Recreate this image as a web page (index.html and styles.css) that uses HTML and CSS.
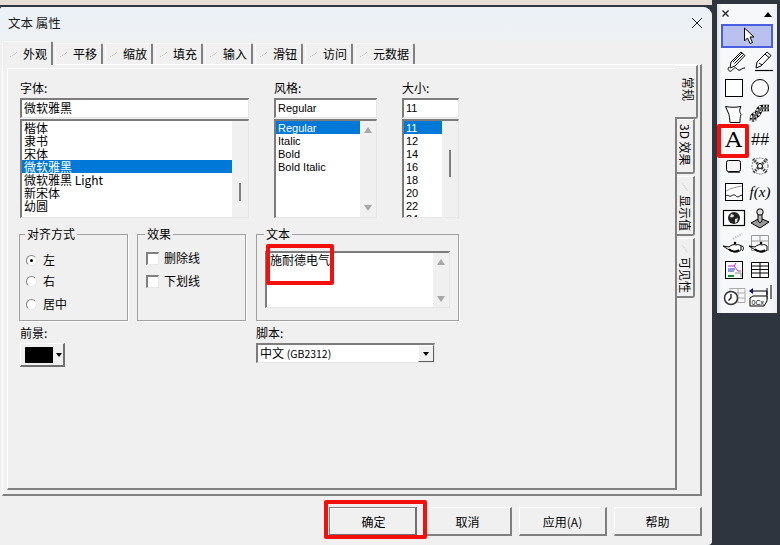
FILE: index.html
```html
<!DOCTYPE html>
<html lang="zh">
<head>
<meta charset="utf-8">
<title>文本 属性</title>
<link rel="stylesheet" href="styles.css">
</head>
<body>
<svg class="defs" width="0" height="0" aria-hidden="true">
  <symbol id="tick" viewBox="0 0 8 8"><path d="M0 6.5h1M2 5.5h1M3.500 4.500h1M5 3.500h1M6 2.500h1" stroke="#c4c4c4" fill="none"/></symbol>
  <symbol id="tickv" viewBox="0 0 8 8"><path d="M1.500 1h1M2.500 2.500h1M3.500 4h1M4.500 5.500h1M5.500 7h1" stroke="#c4c4c4" fill="none"/></symbol>
</svg>

<div class="backdrop"></div>

<main class="dialog">
  <header class="titlebar">
    <span class="title">文本 属性</span>
    <svg class="close" width="12" height="12" viewBox="0 0 12 12"><path d="M1 1l10 10M11 1L1 11" stroke="#222" fill="none"/></svg>
  </header>

  <nav class="tabs">
    <div class="tab tab-active"><svg class="tick"><use href="#tick"/></svg>外观</div>
    <div class="tab"><svg class="tick"><use href="#tick"/></svg>平移</div>
    <div class="tab"><svg class="tick"><use href="#tick"/></svg>缩放</div>
    <div class="tab"><svg class="tick"><use href="#tick"/></svg>填充</div>
    <div class="tab"><svg class="tick"><use href="#tick"/></svg>输入</div>
    <div class="tab"><svg class="tick"><use href="#tick"/></svg>滑钮</div>
    <div class="tab"><svg class="tick"><use href="#tick"/></svg>访问</div>
    <div class="tab tab-wide"><svg class="tick"><use href="#tick"/></svg>元数据</div>
  </nav>

  <section class="sheet">
    <div class="panel">
      <div class="row-fonts">
        <div class="col col-font">
          <label class="lbl">字体:</label>
          <div class="input">微软雅黑</div>
          <div class="list">
            <div class="rows">
              <div class="item">楷体</div>
              <div class="item">隶书</div>
              <div class="item">宋体</div>
              <div class="item item-on">微软雅黑</div>
              <div class="item">微软雅黑 Light</div>
              <div class="item">新宋体</div>
              <div class="item">幼圆</div>
            </div>
            <div class="scroll"><div class="thumb thumb-font"></div></div>
          </div>
        </div>
        <div class="col col-style">
          <label class="lbl">风格:</label>
          <div class="input">Regular</div>
          <div class="list">
            <div class="rows">
              <div class="item item-on">Regular</div>
              <div class="item">Italic</div>
              <div class="item">Bold</div>
              <div class="item">Bold Italic</div>
            </div>
            <div class="scroll scroll-arrows"><i class="arr-up"></i><i class="arr-down"></i></div>
          </div>
        </div>
        <div class="col col-size">
          <label class="lbl">大小:</label>
          <div class="input">11</div>
          <div class="list">
            <div class="rows">
              <div class="item item-on">11</div>
              <div class="item">12</div>
              <div class="item">14</div>
              <div class="item">16</div>
              <div class="item">18</div>
              <div class="item">20</div>
              <div class="item">22</div>
              <div class="item">24</div>
            </div>
            <div class="scroll"><div class="thumb thumb-size"></div></div>
          </div>
        </div>
      </div>

      <div class="row-groups">
        <fieldset class="group group-small">
          <legend>对齐方式</legend>
          <div class="opt opt-radio"><span class="radio radio-on"></span>左</div>
          <div class="opt opt-radio"><span class="radio"></span>右</div>
          <div class="opt opt-radio opt-last"><span class="radio"></span>居中</div>
        </fieldset>
        <fieldset class="group group-small group-effect">
          <legend>效果</legend>
          <div class="opt opt-check"><span class="check"></span>删除线</div>
          <div class="opt opt-check"><span class="check"></span>下划线</div>
        </fieldset>
        <fieldset class="group group-text">
          <legend>文本</legend>
          <div class="textarea">
            <div class="textval">施耐德电气</div>
            <div class="scroll scroll-arrows scroll-ta"><i class="arr-up"></i><i class="arr-down"></i></div>
          </div>
        </fieldset>
      </div>

      <div class="row-bottom">
        <div class="col-fg">
          <label class="lbl">前景:</label>
          <div class="colorbtn"><span class="swatch"></span><i class="arr-black"></i></div>
        </div>
        <div class="col-script">
          <label class="lbl">脚本:</label>
          <div class="select">
            <span class="selval">中文 <span class="latin">(GB2312)</span></span>
            <span class="selbtn"><i class="arr-black"></i></span>
          </div>
        </div>
      </div>
    </div>

    <aside class="vtabs">
      <div class="vtab vtab-active">常规</div>
      <div class="vtab vtab-3d">3D 效果</div>
      <div class="vtab vtab-val"><svg class="tickv"><use href="#tickv"/></svg>显示值</div>
      <div class="vtab vtab-val"><svg class="tickv"><use href="#tickv"/></svg>可见性</div>
    </aside>
  </section>

  <footer class="actions">
    <button class="btn btn-default">确定</button>
    <button class="btn">取消</button>
    <button class="btn">应用(A)</button>
    <button class="btn">帮助</button>
  </footer>
</main>

<aside class="palette">
  <div class="pal-head">
    <svg width="10" height="10" viewBox="0 0 10 10"><path d="M1.500 1.500l6 6M7.500 1.500l-6 6" stroke="#222" stroke-width="1.300" fill="none"/></svg>
    <i class="arr-pal"></i>
  </div>
  <div class="pal-select">
    <svg width="12" height="18" viewBox="0 0 12 18"><path d="M1.500 1v13l3-3 2.500 5.500 2.500-1-2.500-5.500h4z" fill="#fff" stroke="#000"/></svg>
  </div>
  <div class="pal-grid">
    <div class="cell"><svg width="26" height="26" viewBox="0 0 26 26"><path d="M10 13L20 3l4 3.500L14 17l-5 2z" fill="#fff" stroke="#000"/><path d="M12 13l9-9M13.500 14.500l9-9" stroke="#000" fill="none"/><path d="M8 18c-2 2 0 5 2 4s3-4 5-3 2 3 4 2 2-2 5-2" stroke="#000" fill="none"/></svg></div>
    <div class="cell"><svg width="26" height="26" viewBox="0 0 26 26"><path d="M10 13L20 3l4 3.500L14 17l-5 2z" fill="#fff" stroke="#000"/><path d="M18 5l4 3.500M12 14l3 2" stroke="#000" fill="none"/><path d="M8 21.500h18" stroke="#000" stroke-width="1.200" fill="none"/></svg></div>
    <div class="cell"><svg width="26" height="26" viewBox="0 0 26 26"><rect x="4.500" y="4.500" width="17" height="17" fill="#fff" stroke="#000"/></svg></div>
    <div class="cell"><svg width="26" height="26" viewBox="0 0 26 26"><circle cx="13" cy="13" r="8.500" fill="#fff" stroke="#000"/></svg></div>
    <div class="cell"><svg width="26" height="26" viewBox="0 0 26 26"><path d="M4.500 5.500c5 1 10 1 15.500 0-2 4-1.500 5 0 8-1 3-1 5-1 8h-10c0-3-1-7-1-8z" fill="#fff" stroke="#000"/></svg></div>
    <div class="cell"><svg width="26" height="26" viewBox="0 0 26 26"><path d="M6 20v-3c0-3 4-3 5-5s1-5 5-5h6" stroke="#000" stroke-width="6.500" fill="none"/><path d="M6 20v-3c0-3 4-3 5-5s1-5 5-5h6" stroke="#fff" stroke-width="5.500" fill="none" stroke-dasharray="1.500 1.500"/><path d="M6 21v-4c0-3 4-3 5-5s1-5 5-5h6" stroke="#666" stroke-width="2.500" fill="none"/></svg></div>
    <div class="cell"><span class="glyph-a">A</span></div>
    <div class="cell"><span class="glyph-hash">##</span></div>
    <div class="cell"><svg width="26" height="26" viewBox="0 0 26 26"><rect x="5.500" y="7.500" width="14" height="11" rx="2" fill="#f4f4f4" stroke="#000"/><path d="M7 19.500h12" stroke="#555" fill="none"/></svg></div>
    <div class="cell"><svg width="26" height="26" viewBox="0 0 26 26"><circle cx="13" cy="13" r="8" fill="none" stroke="#777" stroke-dasharray="2 1"/><path d="M6 6l14 14M20 6L6 20" stroke="#444" stroke-width="3" stroke-dasharray="1.500 1" fill="none"/><circle cx="13" cy="13" r="2.500" fill="#fff" stroke="#000"/></svg></div>
    <div class="cell"><svg width="26" height="26" viewBox="0 0 26 26"><rect x="4.500" y="4.500" width="17" height="17" fill="#fff" stroke="#000"/><path d="M5 12c5-3 10-4 16-5" stroke="#999" fill="none"/><path d="M5 17c2-2 3 1 5 0s3-2 5 0 3 0 6-1" stroke="#000" fill="none"/></svg></div>
    <div class="cell"><span class="glyph-fx">f(x)</span></div>
    <div class="cell"><svg width="26" height="26" viewBox="0 0 26 26"><rect x="2.500" y="5.500" width="21" height="15" fill="#fff" stroke="#000" stroke-width="1.200"/><circle cx="13" cy="13" r="6" fill="#222"/><path d="M10 9c2 0 3 1 3 2s-3 2-4 1zM14 14l3-1-1 4-2 1z" fill="#ddd"/></svg></div>
    <div class="cell"><svg width="26" height="26" viewBox="0 0 26 26"><path d="M4 18l9-5 9 4-9 6z" fill="#999" stroke="#000"/><path d="M11 7h4v9c-1 2-3 2-4 0z" fill="#bbb" stroke="#000"/><circle cx="13" cy="7" r="3.200" fill="#ddd" stroke="#000"/></svg></div>
    <div class="cell"><svg width="26" height="26" viewBox="0 0 26 26"><path d="M12 8l5-3 4-2" stroke="#ccc" stroke-width="2" stroke-dasharray="1.500 1" fill="none"/><path d="M2 15l6 1c2-2 5-3 7-2 2-1 4 0 5 1v4c-2 2-6 3-9 1-3-1-6-3-9-5z" fill="#fff" stroke="#000"/><path d="M8 18c2 3 7 3 10 1" stroke="#000" stroke-width="2" fill="none"/><circle cx="14" cy="12" r="1.300"/><path d="M20 15c3-1 3 4 1 5" stroke="#000" fill="none"/></svg></div>
    <div class="cell"><svg width="26" height="26" viewBox="0 0 26 26"><path d="M4.500 4.500h17v15h-17zM4.500 10h17M13 4.500v5" stroke="#999" fill="none"/><path d="M2 15l6 1c2-2 5-3 7-2 2-1 4 0 5 1v4c-2 2-6 3-9 1-3-1-6-3-9-5z" fill="#fff" stroke="#000"/><path d="M8 18c2 3 7 3 10 1" stroke="#000" stroke-width="2" fill="none"/><circle cx="14" cy="12" r="1.300"/></svg></div>
    <div class="cell"><svg width="26" height="26" viewBox="0 0 26 26"><rect x="4.500" y="4.500" width="17" height="17" fill="#fff" stroke="#000"/><path d="M7 9h6l4 5h3M15 6l-2 3" stroke="#d020c0" fill="none"/><path d="M7 12h7M7 14h6" stroke="#2030d0" fill="none"/><path d="M7 19h6" stroke="#109030" stroke-width="2" fill="none"/><path d="M14 16h6v4" stroke="#888" fill="none"/></svg></div>
    <div class="cell"><svg width="26" height="26" viewBox="0 0 26 26"><path d="M4.500 5.500h17v15h-17zM4.500 9h17M4.500 12.500h17M4.500 16h17M13 5.500v15" stroke="#000" fill="#fff"/></svg></div>
    <div class="cell"><svg width="26" height="26" viewBox="0 0 26 26"><path d="M9 5.500h15v14H14M9 5v4M9 10h15M9 15h15M17 5.500v14" stroke="#aaa" fill="none"/><circle cx="10" cy="15" r="6.500" fill="#fff" stroke="#333" stroke-width="1.500"/><path d="M10 11v4l-2.500 2.500" stroke="#000" fill="none" stroke-width="1.200"/></svg></div>
    <div class="cell"><svg width="26" height="26" viewBox="0 0 26 26"><path d="M6 5l-4 3 4 3z" fill="#101070"/><path d="M6 8h14v4M24 2v14M20 5v11" stroke="#000" fill="none"/><path d="M3 15l3-2h14v5l-3 5H3z" fill="#fff" stroke="#000"/><text class="ocx" x="4.500" y="21.500">0Cx</text></svg></div>
  </div>
</aside>

<div class="mark mark-text"></div>
<div class="mark mark-ok"></div>
<div class="mark mark-a"></div>
</body>
</html>
```

FILE: styles.css
```css
* { box-sizing: border-box; }

html, body { margin: 0; padding: 0; }

body {
  position: relative;
  width: 780px;
  height: 545px;
  overflow: hidden;
  background: #2f353f;
  color: #000;
  font: 12px/14px "Noto Sans CJK SC", "Noto Sans", sans-serif;
}

.defs { position: absolute; }

.backdrop {
  position: absolute;
  left: 0;
  top: 0;
  width: 712px;
  height: 5px;
  background: #e7ddd3;
}

/* Dialog window */
.dialog {
  position: absolute;
  left: 0;
  top: 7px;
  width: 712px;
  height: 538px;
  display: flex;
  flex-direction: column;
  background: #f0f0f0;
  border-radius: 3px 9px 4px 0;
  overflow: hidden;
}

.titlebar {
  height: 36px;
  flex: none;
  display: flex;
  justify-content: space-between;
  padding: 8px 9px 0 8px;
  background: linear-gradient(#ebf1f7, #eef1f4 70%, #f0f0f0);
}

.title { font-size: 12.500px; line-height: 15px; color: #1a1a1a; }

.close { margin-top: 2px; }

.tabs {
  height: 21px;
  flex: none;
  display: flex;
  padding-left: 3px;
  gap: 2px;
}

.tab {
  width: 48px;
  height: 21px;
  display: flex;
  align-items: center;
  padding-left: 4px;
  border: 1px solid #f8f8f8;
  border-bottom: 0;
  border-right: 2px solid #808080;
  border-radius: 2px 2px 0 0;
}

.tab-wide { width: 60px; }

.tab-active {
  position: relative;
  width: 51px;
  height: 24px;
  margin-top: -2px;
  margin-left: -1px;
  padding-left: 7px;
  background: #f0f0f0;
  z-index: 1;
}

.tick { width: 8px; height: 8px; margin-right: 5px; flex: none; }

.tickv { width: 8px; height: 8px; flex: none; }

/* Property sheet */
.sheet {
  width: 700px;
  height: 432px;
  margin-left: 2px;
  flex: none;
  display: flex;
  padding: 3px 0 4px 4px;
  border-top: 1px solid #fff;
  border-left: 1px solid #fff;
  border-right: 2px solid #808080;
  border-bottom: 2px solid #808080;
}

.panel {
  width: 670px;
  flex: none;
  padding: 13px 0 0 12px;
  border: 1px solid #fff;
  border-right: 2px solid #808080;
  border-bottom: 2px solid #808080;
}

.row-fonts { display: flex; gap: 25px; }

.col { display: flex; flex-direction: column; }
.col-font { width: 229px; }
.col-style { width: 103px; }
.col-size { width: 57px; }

.lbl { display: block; height: 14px; margin-bottom: 2px; line-height: 12px; }

.input {
  height: 20px;
  padding-left: 2px;
  line-height: 16px;
  background: #fff;
  border-top: 2px solid #7c7c7c;
  border-left: 2px solid #7c7c7c;
  border-right: 1px solid #e6e6e6;
  border-bottom: 1px solid #e6e6e6;
}

.col-style .input, .col-size .input, .col-style .item, .col-size .item {
  font-family: "Liberation Sans", "Noto Sans CJK SC", sans-serif;
  font-size: 11px;
}

.list {
  height: 99px;
  margin-top: 1px;
  display: flex;
  overflow: hidden;
  background: #fff;
  border-top: 2px solid #7c7c7c;
  border-left: 2px solid #7c7c7c;
  border-right: 1px solid #e6e6e6;
  border-bottom: 1px solid #e6e6e6;
}

.rows { flex: 1; min-width: 0; }

.item {
  height: 13px;
  line-height: 14px;
  padding-left: 2px;
  white-space: nowrap;
}

.item-on { background: #0078d7; color: #fff; }

.scroll {
  width: 16px;
  flex: none;
  display: flex;
  justify-content: center;
  align-items: flex-start;
  background: #f0f0f0;
}

.thumb { width: 2px; background: #808080; }
.thumb-font { height: 18px; margin-top: 62px; }
.thumb-size { height: 27px; margin-top: 29px; }

.scroll-arrows {
  flex-direction: column;
  align-items: center;
  justify-content: space-between;
  padding: 6px 0;
}

.arr-up, .arr-down {
  width: 0;
  height: 0;
  border-left: 4px solid transparent;
  border-right: 4px solid transparent;
}
.arr-up { border-bottom: 6px solid #a8a8a8; }
.arr-down { border-top: 6px solid #a8a8a8; }

.arr-black {
  width: 0;
  height: 0;
  border-left: 3.500px solid transparent;
  border-right: 3.500px solid transparent;
  border-top: 4px solid #000;
}

/* Group boxes */
.row-groups {
  display: flex;
  gap: 9px;
  margin: 9px 0 0 -1px;
}

.group {
  margin: 0;
  padding: 3px 0 0 6px;
  height: 94px;
  border: 1px solid #a0a0a0;
  box-shadow: 1px 1px 0 #fff;
}

.group legend {
  margin-left: -1px;
  padding: 0 2px;
  line-height: 14px;
}

.group-small { width: 109px; }
.group-text { width: 203px; margin-left: 1px; padding: 10px 0 0 8px; }
.group-effect { padding-left: 8px; }

.opt { display: flex; align-items: center; height: 14px; }
.opt-radio { margin-top: 7px; }
.opt-radio:first-of-type { margin-top: 9px; }
.opt-last { margin-top: 9px; }
.opt-check { margin-top: 9px; }
.opt-check:first-of-type { margin-top: 7px; }

.radio {
  position: relative;
  width: 11px;
  height: 11px;
  margin-right: 6px;
  flex: none;
  border-radius: 50%;
  background: #fff;
  border: 1px solid;
  border-color: #808080 #e8e8e8 #e8e8e8 #808080;
}

.radio-on::after {
  content: "";
  position: absolute;
  left: 3px;
  top: 3px;
  width: 3px;
  height: 3px;
  border-radius: 50%;
  background: #000;
}

.check {
  width: 13px;
  height: 13px;
  margin-right: 5px;
  flex: none;
  background: #fff;
  border-top: 2px solid #808080;
  border-left: 2px solid #808080;
  border-right: 1px solid #e8e8e8;
  border-bottom: 1px solid #e8e8e8;
}

.textarea {
  width: 185px;
  height: 57px;
  display: flex;
  background: #fff;
  border-top: 2px solid #7c7c7c;
  border-left: 2px solid #7c7c7c;
  border-right: 1px solid #e6e6e6;
  border-bottom: 1px solid #e6e6e6;
}

.textval { flex: 1; padding: 0 0 0 3px; line-height: 14px; }

.scroll-ta { padding: 6px 0 5px; }

/* Bottom row */
.row-bottom { display: flex; margin-top: 6px; }

.col-fg { width: 236px; }

.colorbtn {
  width: 45px;
  height: 24px;
  display: flex;
  align-items: center;
  padding-left: 4px;
  background: #f0f0f0;
  border-top: 1px solid #fff;
  border-left: 1px solid #fff;
  border-right: 2px solid #707070;
  border-bottom: 2px solid #707070;
}

.swatch { width: 28px; height: 16px; margin-right: 3px; background: #000; }

.select {
  width: 179px;
  height: 20px;
  display: flex;
  background: #fff;
  border-top: 2px solid #7c7c7c;
  border-left: 2px solid #7c7c7c;
  border-right: 1px solid #e6e6e6;
  border-bottom: 1px solid #e6e6e6;
}

.selval { flex: 1; padding-left: 2px; line-height: 16px; }

.latin { font-size: 10.500px; }

.selbtn {
  width: 16px;
  display: flex;
  align-items: center;
  justify-content: center;
  background: #f0f0f0;
  border-top: 1px solid #fff;
  border-left: 1px solid #fff;
  border-right: 1px solid #606060;
  border-bottom: 1px solid #606060;
}

/* Vertical tabs */
.vtabs {
  display: flex;
  flex-direction: column;
  width: 21px;
  margin-top: -3px;
}

.vtab {
  width: 18px;
  writing-mode: vertical-rl;
  text-orientation: sideways;
  white-space: nowrap;
  line-height: 16px;
  display: flex;
  align-items: center;
  border: 1px solid #fff;
  border-left: 0;
  border-right: 2px solid #808080;
  border-bottom: 2px solid #808080;
  border-radius: 0 0 3px 0;
}

.vtab-active {
  position: relative;
  width: 23px;
  height: 54px;
  margin-left: -2px;
  padding: 11px 0 0 4px;
  background: #f0f0f0;
}

.vtab-3d { height: 55px; padding-top: 4px; }

.vtab-val { height: 60px; margin-top: 2px; padding-top: 6px; gap: 4px; }

/* Action buttons */
.actions {
  flex: 1;
  display: flex;
  justify-content: flex-end;
  gap: 7px;
  padding: 11px 10px 0 0;
}

.btn {
  width: 88px;
  height: 29px;
  padding: 1px 0 0;
  font: 12px/14px "Noto Sans CJK SC", sans-serif;
  color: #000;
  background: #f0f0f0;
  border: 1px solid #fff;
  border-right: 2px solid #808080;
  border-bottom: 2px solid #808080;
}

.btn-default {
  padding-left: 2px;
  border: 1px solid #808080;
  border-right: 2px solid #707070;
  border-bottom: 2px solid #707070;
  box-shadow: inset 1px 1px 0 #fff;
}

/* Tool palette */
.palette {
  position: absolute;
  left: 717px;
  top: 4px;
  width: 60px;
  height: 309px;
  padding: 0 4px;
  background: linear-gradient(90deg, #dfe2e6, #f7f8fa 8%, #f7f8fa 85%, #eceef1);
}

.pal-head {
  height: 20px;
  display: flex;
  align-items: center;
  justify-content: space-between;
}

.arr-pal {
  width: 0;
  height: 0;
  margin-right: 1px;
  border-left: 4px solid transparent;
  border-right: 4px solid transparent;
  border-bottom: 5px solid #000;
}

.pal-select {
  width: 52px;
  height: 24px;
  display: flex;
  align-items: center;
  justify-content: center;
  padding-left: 3px;
  background: #b9c1ee;
  border: 2px solid #4a5fe0;
}

.pal-grid {
  width: 52px;
  margin-top: 1px;
  display: grid;
  grid-template-columns: 26px 26px;
  grid-auto-rows: 26px;
}

.cell {
  display: flex;
  align-items: center;
  justify-content: center;
}

.glyph-a {
  font: 400 21px/26px "DejaVu Serif", serif;
  transform: scaleX(1.1);
}

.glyph-hash {
  font: italic 400 16px/26px "Liberation Sans", sans-serif;
}

.glyph-fx {
  font: italic 15px/26px "Liberation Serif", serif;
}

.ocx {
  font: 7px "Liberation Sans", sans-serif;
}

/* Red annotations over the screenshot */
.mark {
  position: absolute;
  border: 4px solid #f20f0c;
  border-radius: 2px;
}
.mark-text { left: 266px; top: 244px; width: 68px; height: 41px; }
.mark-ok { left: 324px; top: 500px; width: 103px; height: 39px; }
.mark-a { left: 717px; top: 124px; width: 32px; height: 34px; }
```
